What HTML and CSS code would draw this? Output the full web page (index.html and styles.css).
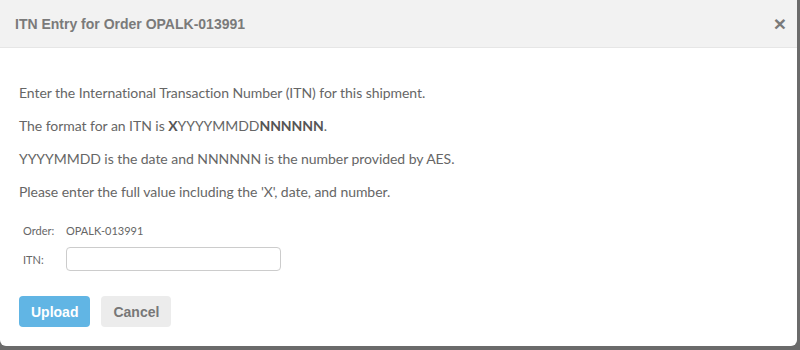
FILE: index.html
```html
<!DOCTYPE html>
<html lang="en">
<head>
  <meta charset="UTF-8">
  <title>ITN Entry</title>
  <link rel="stylesheet" href="styles.css">
</head>
<body>

  <!-- ITN modal -->
  <div class="itn-modal">
    <div class="itn-modal-header">
      <h3>ITN Entry for Order OPALK-013991</h3>
      <span class="close-btn">&times;</span>
    </div>

    <div class="itn-modal-body">
      <p>Enter the International Transaction Number (ITN) for this shipment.</p>
      <p>The format for an ITN is <b>X</b>YYYYMMDD<b>NNNNNN</b>.</p>
      <p>YYYYMMDD is the date and NNNNNN is the number provided by AES.</p>
      <p>Please enter the full value including the 'X', date, and number.</p>

      <div class="itn-form">
        <div class="form-row">
          <label>Order:</label>
          <span>OPALK-013991</span>
        </div>
        <div class="form-row">
          <label for="itn">ITN:</label>
          <input type="text" id="itn">
        </div>
      </div>

      <div class="actions">
        <button class="btn btn-primary">Upload</button>
        <button class="btn btn-default">Cancel</button>
      </div>
    </div>
  </div>

</body>
</html>
```

FILE: styles.css
```css
body {
  margin: 0;
  background-color: #6b6b6b;
  font-family: Lato, "Open Sans", sans-serif;
  width: 800px;
  height: 350px;
  overflow: hidden;
  position: relative;
}

/* Modal */
.itn-modal {
  position: absolute;
  left: 0;
  top: 0;
  width: 797px;
  height: 346px;
  background-color: #fff;
  border-radius: 0 0 6px 6px;
}

.itn-modal-header {
  display: flex;
  justify-content: space-between;
  align-items: center;
  height: 47px;
  padding: 0 12px 0 15px;
  background-color: #f2f2f2;
  border-bottom: 1px solid #e6e6e6;
}

.itn-modal-header h3 {
  margin: 0;
  font-family: Arial, "Liberation Sans", sans-serif;
  font-size: 14px;
  font-weight: bold;
  color: #7a7a7a;
}

.close-btn {
  font-family: Arial, "Liberation Sans", sans-serif;
  font-size: 21px;
  font-weight: bold;
  color: #7a7a7a;
  line-height: 1;
  margin-top: -1px;
  margin-right: -1px;
}

.itn-modal-body {
  padding: 35px 19px 0;
}

.itn-modal-body p {
  margin: 0 0 13px;
  font-size: 14px;
  line-height: 20px;
  color: #666;
  letter-spacing: -0.05px;
}

.itn-modal-body b {
  color: #555;
}

/* form rows */
.itn-form {
  display: flex;
  flex-direction: column;
  gap: 10px;
  margin-top: 22px;
  padding-left: 4px;
}

.form-row {
  display: flex;
  align-items: center;
  font-size: 11px;
  color: #666;
}

.form-row label {
  width: 43px;
}

.form-row input {
  width: 215px;
  height: 24px;
  box-sizing: border-box;
  border: 1px solid #ccc;
  border-radius: 4px;
  padding: 2px 6px;
}

.actions {
  display: flex;
  gap: 11px;
  margin-top: 25px;
}

.btn {
  height: 31px;
  padding: 0 12px;
  border: none;
  border-radius: 4px;
  font-family: Arial, "Liberation Sans", sans-serif;
  font-size: 14px;
  font-weight: bold;
  cursor: pointer;
}

.btn-primary {
  background-color: #61b5e4;
  color: #fff;
}

.btn-default {
  background-color: #ececec;
  color: #777;
}
```
